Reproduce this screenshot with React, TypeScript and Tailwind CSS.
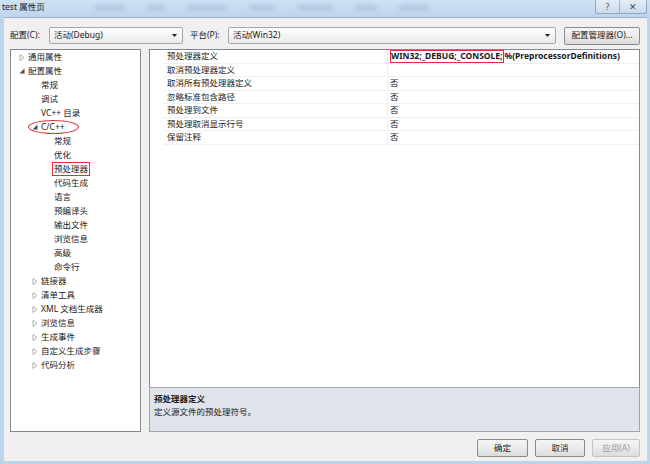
import React from "react";

const FONT = { fontFamily: '"Noto Sans","Noto Sans CJK SC",sans-serif' };

type Arrow = "none" | "collapsed" | "expanded";

function ArrowIcon({ kind }: { kind: Arrow }) {
  if (kind === "collapsed")
    return (
      <svg width="6" height="7" viewBox="0 0 6 7">
        <path d="M1 0.5 L5 3.5 L1 6.5 Z" fill="none" stroke="#a6a6a6" strokeWidth="0.9" />
      </svg>
    );
  if (kind === "expanded")
    return (
      <svg width="6" height="6" viewBox="0 0 6 6">
        <path d="M5.5 0.5 L5.5 5.5 L0.5 5.5 Z" fill="#4a4a4a" />
      </svg>
    );
  return null;
}

type TreeItem = { level: number; arrow: Arrow; text: string; mark?: "ellipse" | "box" };

const tree: TreeItem[] = [
  { level: 0, arrow: "collapsed", text: "通用属性" },
  { level: 0, arrow: "expanded", text: "配置属性" },
  { level: 1, arrow: "none", text: "常规" },
  { level: 1, arrow: "none", text: "调试" },
  { level: 1, arrow: "none", text: "VC++ 目录" },
  { level: 1, arrow: "expanded", text: "C/C++", mark: "ellipse" },
  { level: 2, arrow: "none", text: "常规" },
  { level: 2, arrow: "none", text: "优化" },
  { level: 2, arrow: "none", text: "预处理器", mark: "box" },
  { level: 2, arrow: "none", text: "代码生成" },
  { level: 2, arrow: "none", text: "语言" },
  { level: 2, arrow: "none", text: "预编译头" },
  { level: 2, arrow: "none", text: "输出文件" },
  { level: 2, arrow: "none", text: "浏览信息" },
  { level: 2, arrow: "none", text: "高级" },
  { level: 2, arrow: "none", text: "命令行" },
  { level: 1, arrow: "collapsed", text: "链接器" },
  { level: 1, arrow: "collapsed", text: "清单工具" },
  { level: 1, arrow: "collapsed", text: "XML 文档生成器" },
  { level: 1, arrow: "collapsed", text: "浏览信息" },
  { level: 1, arrow: "collapsed", text: "生成事件" },
  { level: 1, arrow: "collapsed", text: "自定义生成步骤" },
  { level: 1, arrow: "collapsed", text: "代码分析" },
];

const props: [string, string][] = [
  ["预处理器定义", ""],
  ["取消预处理器定义", ""],
  ["取消所有预处理器定义", "否"],
  ["忽略标准包含路径", "否"],
  ["预处理到文件", "否"],
  ["预处理取消显示行号", "否"],
  ["保留注释", "否"],
];

function Combo({ text, className }: { text: string; className: string }) {
  return (
    <div
      className={`h-[17px] flex items-center border border-[#a7a7a7] rounded-[2px] bg-gradient-to-b from-[#fdfdfd] to-[#ebebeb] pl-[4px] pr-[5px] ${className}`}
    >
      <span className="flex-1 text-[8.5px] text-[#1a1a1a] leading-none">{text}</span>
      <svg width="5" height="3" viewBox="0 0 5 3">
        <path d="M0 0 L5 0 L2.5 3 Z" fill="#222" />
      </svg>
    </div>
  );
}

function Btn({ text, disabled, className }: { text: string; disabled?: boolean; className: string }) {
  return (
    <div
      className={`h-[18px] flex items-center justify-center border ${
        disabled ? "border-[#c5c5c5] text-[#9a9a9a]" : "border-[#8a8a8a] text-[#1a1a1a]"
      } rounded-[2px] bg-gradient-to-b from-[#f6f6f6] via-[#ebebeb] to-[#dcdcdc] text-[8.5px] leading-none ${className}`}
    >
      {text}
    </div>
  );
}

export default function App() {
  return (
    <div
      className="w-[650px] h-[464px] flex flex-col bg-[#bcd4ec] overflow-hidden"
      style={FONT}
    >
      {/* title bar */}
      <div className="h-[17px] flex items-start relative bg-gradient-to-b from-[#cfe1f3] to-[#bdd5ec]">
        <div className="flex-1 flex items-center h-[15px] pl-[2px] text-[8.5px] text-[#1b1b1b] leading-none">
          test 属性页
          <div className="ml-[50px] flex gap-[22px] opacity-40 blur-[2px]">
            <div className="w-[30px] h-[5px] bg-[#8aa6c2] rounded" />
            <div className="w-[18px] h-[5px] bg-[#8aa6c2] rounded" />
            <div className="w-[40px] h-[5px] bg-[#8aa6c2] rounded" />
            <div className="w-[26px] h-[5px] bg-[#8aa6c2] rounded" />
            <div className="w-[36px] h-[5px] bg-[#8aa6c2] rounded" />
            <div className="w-[22px] h-[5px] bg-[#8aa6c2] rounded" />
            <div className="w-[30px] h-[5px] bg-[#8aa6c2] rounded" />
          </div>
        </div>
        <div className="flex h-[14px] mr-[3px] border border-t-0 border-[#8ea7c2] rounded-b-[3px] bg-gradient-to-b from-[#e3edf7] to-[#cbdbec] overflow-hidden">
          <div className="w-[24px] flex items-center justify-center text-[8px] text-[#3b4a5c] border-r border-[#9fb5cc] leading-none">
            ?
          </div>
          <div className="w-[26px] flex items-center justify-center text-[9px] text-[#3b4a5c] leading-none">
            ✕
          </div>
        </div>
      </div>

      {/* client */}
      <div className="flex-1 flex flex-col ml-[4px] mr-[3px] mb-[3px] bg-[#f0f0f0] border-t border-[#9db3ca] pl-[6px] pr-[7px] pt-[9px]">
        {/* config row */}
        <div className="flex items-center h-[17px] text-[8.5px] text-[#1a1a1a] leading-none">
          <span className="w-[39px]">配置(C):</span>
          <Combo text="活动(Debug)" className="w-[134px]" />
          <span className="ml-[7px] w-[38px]">平台(P):</span>
          <Combo text="活动(Win32)" className="w-[328px]" />
          <Btn text="配置管理器(O)..." className="ml-[8px] w-[76px] h-[17px]" />
        </div>

        {/* panels */}
        <div className="flex mt-[5px] h-[383px] gap-[8px]">
          {/* tree */}
          <div className="w-[131px] bg-white border border-[#828790] pt-[0px] text-[8.5px] text-[#1a1a1a]">
            {tree.map((t, i) => (
              <div
                key={i}
                className="h-[14px] flex items-center leading-none relative"
                style={{ paddingLeft: 5 + t.level * 13 }}
              >
                <div className="w-[12px] flex items-center justify-center">
                  <ArrowIcon kind={t.arrow} />
                </div>
                {t.mark === "box" ? (
                  <span className="border border-[#e0303a] px-[1px] py-[2px] -ml-[2px]">{t.text}</span>
                ) : (
                  <span>{t.text}</span>
                )}
                {t.mark === "ellipse" && (
                  <div className="absolute left-[17px] top-[0px] w-[51px] h-[14px] border border-[#e0303a] rounded-[50%]" />
                )}
              </div>
            ))}
          </div>

          {/* right column */}
          <div className="flex-1 flex flex-col">
            <div className="flex-1 bg-white border border-[#828790] border-b-0 text-[8.5px] text-[#1a1a1a]">
              {props.map(([k, v], i) => (
                <div key={i} className="h-[13.5px] flex leading-none">
                  <div className="w-[13px]" />
                  <div className="w-[225px] flex items-center pl-[4px] border-b border-[#f0f0f0] border-r">
                    {k}
                  </div>
                  <div className="flex-1 flex items-center pl-[2px] border-b border-[#f0f0f0]">
                    {i === 0 ? (
                      <span className="font-bold flex items-center">
                        <span className="border border-[#e0303a] py-[1px] pr-[1px]">WIN32;_DEBUG;_CONSOLE;</span>
                        <span>%(PreprocessorDefinitions)</span>
                      </span>
                    ) : (
                      v
                    )}
                  </div>
                </div>
              ))}
            </div>
            <div className="h-[45px] bg-[#dfe3ea] border border-[#a0a4ab] pl-[4px] pt-[4px] text-[8.5px] text-[#1a1a1a] leading-[13px]">
              <div className="font-bold">预处理器定义</div>
              <div>定义源文件的预处理符号。</div>
            </div>
          </div>
        </div>

        {/* buttons */}
        <div className="flex justify-end mt-[7px] gap-[7px]">
          <Btn text="确定" className="w-[51px]" />
          <Btn text="取消" className="w-[50px]" />
          <Btn text="应用(A)" disabled className="w-[48px]" />
        </div>
      </div>
    </div>
  );
}
